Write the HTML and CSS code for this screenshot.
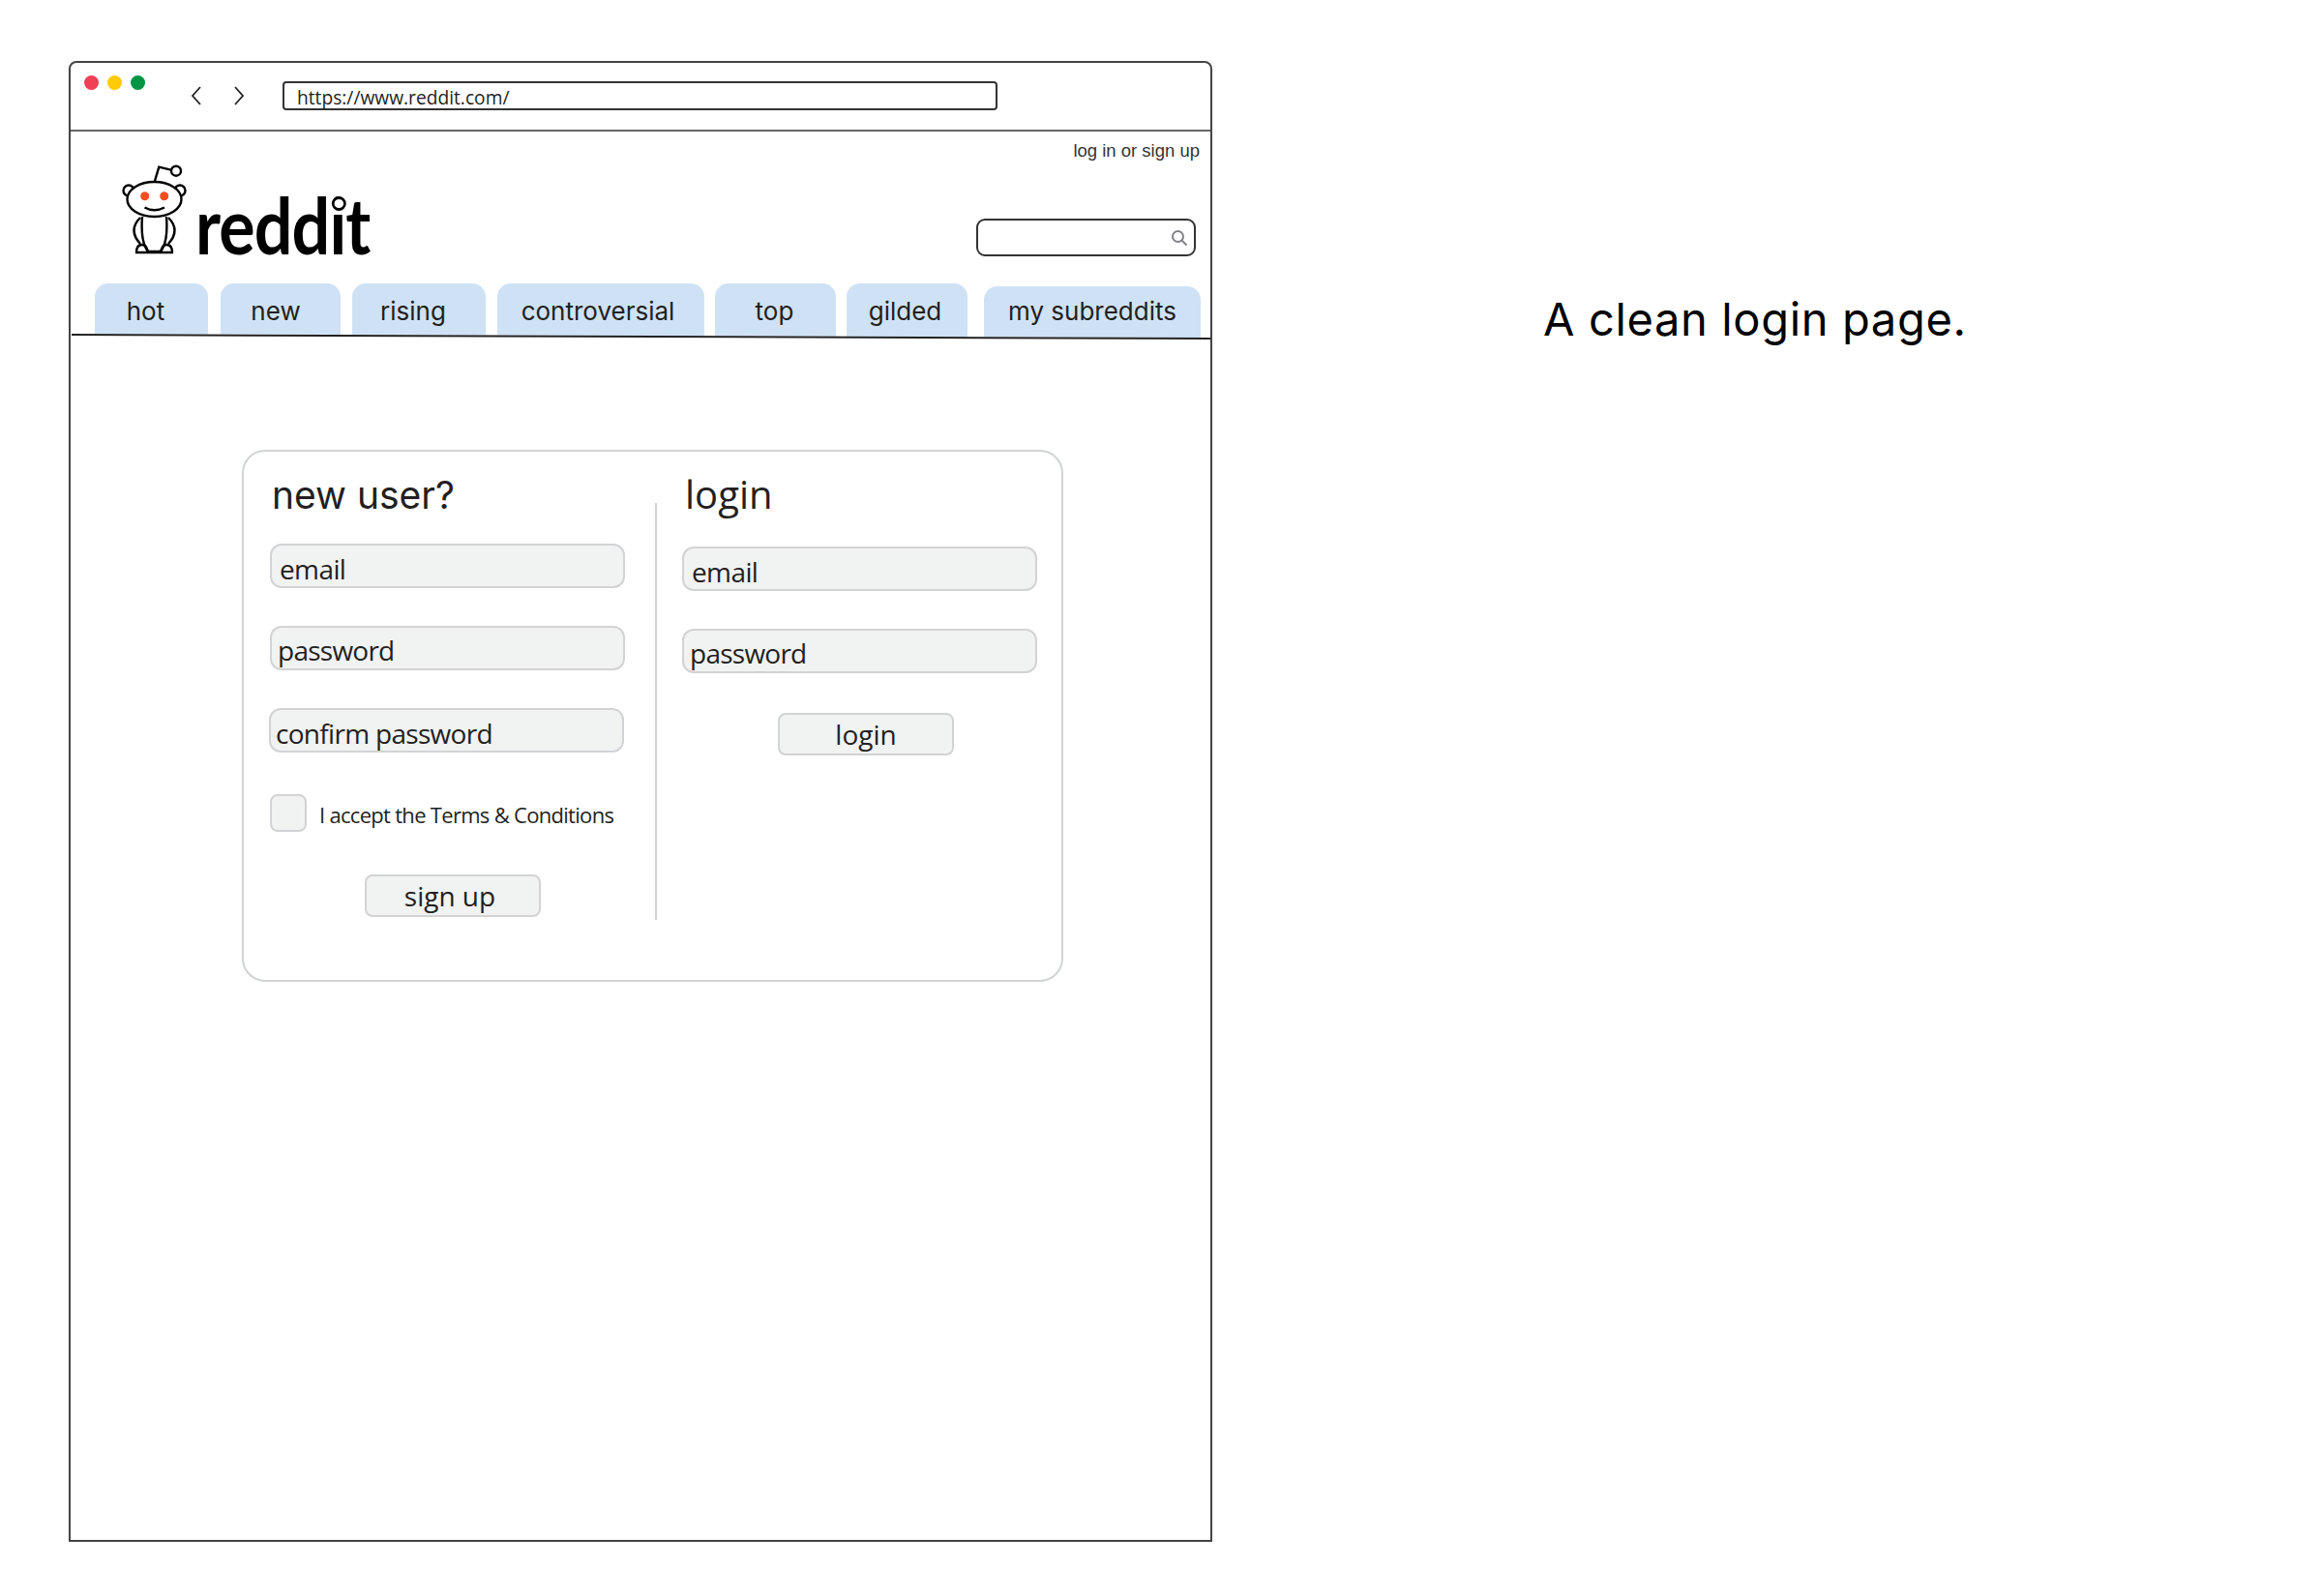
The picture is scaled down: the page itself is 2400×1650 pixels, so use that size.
FILE: index.html
```html
<!DOCTYPE html>
<html lang="en">
<head>
    <meta charset="UTF-8">
    <meta name="viewport" content="width=device-width, initial-scale=1.0">
    <title>reddit login</title>
    <link rel="stylesheet" href="styles.css">
</head>
<body>
<div class="page">
    <div class="browser">
        <div class="toolbar">
            <div class="lights">
                <span class="light red"></span>
                <span class="light yellow"></span>
                <span class="light green"></span>
            </div>
            <svg class="arrows" width="58" height="22" viewBox="0 0 58 22">
                <path d="M11 2 L3 11 L11 20" />
                <path d="M47 2 L55 11 L47 20" />
            </svg>
            <div class="urlbar">https://www.reddit.com/</div>
        </div>

        <div class="header">
            <p class="toplinks">log in or sign up</p>
            <div class="brandrow">
                <div class="brand">
                    <svg class="alien" width="110" height="110" viewBox="0 0 110 110">
                        <path class="line" d="M50 27 L54.3 12.7 L66.7 15.7" />
                        <circle class="line" cx="72" cy="16.7" r="5" />
                        <circle class="line" cx="23" cy="37" r="5.5" />
                        <circle class="line" cx="76" cy="37" r="5.5" />
                        <ellipse class="head" cx="49.5" cy="46" rx="28" ry="18" />
                        <circle class="eye" cx="39.7" cy="42.7" r="4.5" />
                        <circle class="eye" cx="59.7" cy="42.7" r="4.5" />
                        <path class="line" d="M39.5 54.5 Q49.5 60 60 54.5" />
                        <path class="line" d="M35 65 Q22 78 35 92" />
                        <path class="line" d="M64 65 Q77 78 64 92" />
                        <path class="line" d="M31 101 Q31 93 37 93 Q41 93 43 100" />
                        <path class="line" d="M68 101 Q68 93 62 93 Q58 93 56 100" />
                        <path class="line" d="M37 64 Q35 90 43 100 L56 100 Q64 90 62 64" />
                        <path class="line" d="M30 101 L69 101" />
                    </svg>
                    <span class="wordmark">reddit<span class="idot"></span></span>
                </div>
                <div class="search">
                    <svg width="18" height="18" viewBox="0 0 18 18">
                        <circle cx="7.5" cy="7.5" r="5.5" />
                        <path d="M11.5 11.5 L16.5 16.5" />
                    </svg>
                </div>
            </div>
        </div>

        <div class="tabs">
            <a class="tab tab-hot">hot</a>
            <a class="tab tab-new">new</a>
            <a class="tab tab-rising">rising</a>
            <a class="tab tab-contro">controversial</a>
            <a class="tab tab-top">top</a>
            <a class="tab tab-gilded">gilded</a>
            <a class="tab tab-mine">my subreddits</a>
        </div>
        <div class="tabline"></div>

        <div class="card">
            <div class="col col-new">
                <h2 class="coltitle">new user?</h2>
                <div class="field">email</div>
                <div class="field field-pass">password</div>
                <div class="field field-confirm">confirm password</div>
                <div class="terms">
                    <span class="checkbox"></span>
                    <span class="termstext">I accept the Terms &amp; Conditions</span>
                </div>
                <button class="btn btn-signup">sign up</button>
            </div>
            <div class="divider"></div>
            <div class="col col-login">
                <h2 class="coltitle coltitle-login">login</h2>
                <div class="field">email</div>
                <div class="field field-pass">password</div>
                <button class="btn btn-login">login</button>
            </div>
        </div>
    </div>

    <p class="caption">A clean login page.</p>
</div>
</body>
</html>
```

FILE: styles.css
```css
body {
    margin: 0;
    background: white;
    color: #231f20;
    font-family: "Open Sans", sans-serif;
}
.page {
    display: flex;
    align-items: flex-start;
    padding: 63px 0 0 71px;
}
.browser {
    box-sizing: border-box;
    width: 1182px;
    height: 1531px;
    border: 2px solid #444;
    border-radius: 8px 8px 0 0;
    flex-shrink: 0;
}

/* toolbar */
.toolbar {
    box-sizing: border-box;
    height: 71px;
    border-bottom: 2px solid #666;
    display: flex;
    align-items: flex-start;
}
.lights {
    display: flex;
    gap: 9px;
    margin: 13px 0 0 14px;
}
.light {
    width: 15px;
    height: 15px;
    border-radius: 50%;
}
.red { background: #ef4056; }
.yellow { background: #ffcb05; }
.green { background: #009444; }
.arrows {
    margin: 23px 0 0 46px;
}
.arrows path {
    fill: none;
    stroke: #222;
    stroke-width: 1.8;
}
.urlbar {
    box-sizing: border-box;
    width: 739px;
    height: 30px;
    margin: 19px 0 0 38px;
    padding-left: 13px;
    border: 2px solid #333;
    border-radius: 4px;
    font-size: 19.2px;
    line-height: 29px;
    white-space: nowrap;
}

/* header */
.header {
    height: 157px;
    box-sizing: border-box;
    padding: 0 15px 0 37px;
}
.toplinks {
    margin: 0 -4px 0 0;
    padding-top: 9px;
    text-align: right;
    font-family: "Liberation Sans", sans-serif;
    font-size: 18.5px;
    line-height: 22px;
    color: #333;
}
.brandrow {
    margin-top: -1px;
    display: flex;
    justify-content: space-between;
    align-items: flex-start;
}
.brand {
    display: flex;
    align-items: flex-start;
}
.alien {
    margin-top: -6px;
}
.alien .line {
    fill: none;
    stroke: black;
    stroke-width: 2.4;
}
.alien .head {
    fill: white;
    stroke: black;
    stroke-width: 2.4;
}
.alien .eye {
    fill: #f04e23;
}
.wordmark {
    position: relative;
    margin: 21px 0 0 -18px;
    font-family: "Lato", sans-serif;
    font-weight: 700;
    font-size: 80px;
    line-height: 90px;
    color: black;
    letter-spacing: -1px;
    transform: scaleX(0.875);
    transform-origin: left top;
}
.idot {
    position: absolute;
    top: 16px;
    left: 161px;
    width: 11px;
    height: 9px;
    border: 3px solid black;
    border-radius: 50%;
    background: white;
}
.search {
    box-sizing: border-box;
    width: 227px;
    height: 39px;
    margin-top: 60px;
    padding-right: 6px;
    border: 2.5px solid #333;
    border-radius: 9px;
    display: flex;
    justify-content: flex-end;
    align-items: center;
}
.search circle, .search path {
    fill: none;
    stroke: #808285;
    stroke-width: 2;
}

/* tabs */
.tabs {
    display: flex;
    height: 57px;
    padding-left: 25px;
    clip-path: polygon(0 0, 100% 0, 100% 56px, 0 52px);
    font-family: "Inter", sans-serif;
    font-size: 26px;
}
.tab {
    box-sizing: border-box;
    height: 57px;
    padding-top: 11px;
    line-height: 36px;
    text-align: center;
    background: #cfe2f5;
    border-radius: 14px 14px 0 0;
}
.tab-hot { width: 117px; margin-right: 13px; padding-right: 12px; }
.tab-new { width: 124px; margin-right: 12px; padding-right: 10px; }
.tab-rising { width: 138px; margin-right: 12px; padding-right: 12px; }
.tab-contro { width: 214px; margin-right: 11px; padding-right: 6px; }
.tab-top { width: 125px; margin-right: 11px; padding-right: 2px; }
.tab-gilded { width: 125px; margin-right: 17px; padding-right: 4px; }
.tab-mine { width: 224px; margin-top: 3px; height: 54px; padding-top: 8px; }
.tabline {
    height: 2px;
    margin: -3px 0 0 1px;
    background: #222;
    transform: rotate(0.19deg);
}

/* login card */
.card {
    box-sizing: border-box;
    width: 849px;
    height: 550px;
    margin: 116px 0 0 177px;
    border: 2px solid #d1d3d4;
    border-radius: 24px;
    display: flex;
}
.col {
    display: flex;
    flex-direction: column;
    align-items: flex-start;
}
.col-new {
    width: 425px;
    padding-left: 27px;
    box-sizing: border-box;
}
.col-login {
    padding-left: 26px;
}
.divider {
    width: 2px;
    height: 431px;
    margin-top: 53px;
    background: #d1d3d4;
}
.coltitle {
    margin: 0;
    height: 95px;
    padding: 19px 0 0 2px;
    box-sizing: border-box;
    font-family: "Inter", sans-serif;
    font-weight: 400;
    font-size: 39px;
    line-height: 52px;
}
.coltitle-login {
    height: 98px;
    padding: 18px 0 0 3px;
    font-size: 40px;
    font-family: "Open Sans", sans-serif;
}
.field {
    box-sizing: border-box;
    width: 367px;
    height: 46px;
    margin-bottom: 39px;
    padding-left: 8px;
    background: #f1f2f2;
    border: 2px solid #d1d3d4;
    border-radius: 12px;
    font-size: 28px;
    line-height: 49px;
    letter-spacing: -0.6px;
}
.field-pass {
    padding-left: 6px;
    line-height: 47px;
    letter-spacing: -0.75px;
}
.field-confirm {
    margin-left: -1px;
    padding-left: 5px;
    margin-bottom: 43px;
    letter-spacing: -0.7px;
}
.terms {
    display: flex;
    align-items: flex-start;
    margin-bottom: 41px;
}
.checkbox {
    box-sizing: border-box;
    width: 38px;
    height: 39px;
    background: #f1f2f2;
    border: 2px solid #d1d3d4;
    border-radius: 8px;
}
.termstext {
    margin-left: 13px;
    font-size: 22px;
    line-height: 42px;
    letter-spacing: -0.7px;
    white-space: nowrap;
}
.btn {
    box-sizing: border-box;
    width: 182px;
    height: 44px;
    padding: 0;
    background: #f1f2f2;
    border: 2px solid #d1d3d4;
    border-radius: 8px;
    font-family: "Open Sans", sans-serif;
    font-size: 28px;
    line-height: 38px;
    color: #231f20;
}
.btn-signup { margin-left: 98px; padding-right: 6px; }
.btn-login { margin: 2px 0 0 99px; }

/* note beside the window */
.caption {
    margin: 237px 0 0 342px;
    font-family: "Inter", sans-serif;
    font-size: 47px;
    line-height: 60px;
    letter-spacing: 0.65px;
    color: black;
    white-space: nowrap;
}
```
